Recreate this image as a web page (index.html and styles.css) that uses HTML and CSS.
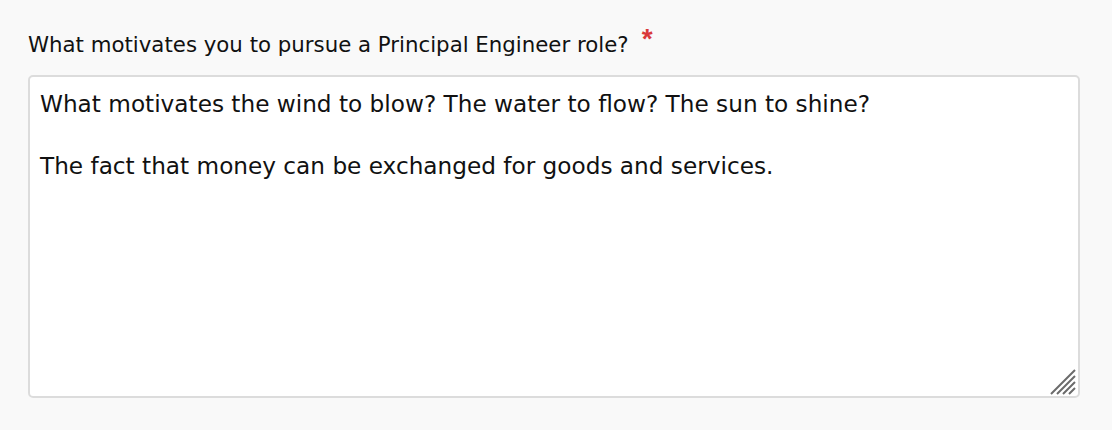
FILE: index.html
```html
<!DOCTYPE html>
<html lang="en">
<head>
    <meta charset="UTF-8">
    <title>Question</title>
    <link rel="stylesheet" href="styles.css">
</head>
<body>
    <div class="field">
        <label class="field-label" for="motivation">
            What motivates you to pursue a Principal Engineer role?
            <span class="required">*</span>
        </label>
        <div class="textarea-wrap">
            <textarea id="motivation" class="answer">What motivates the wind to blow? The water to flow? The sun to shine?

The fact that money can be exchanged for goods and services.</textarea>
            <svg class="resize-grip" width="26" height="26" viewBox="0 0 26 26">
                <path d="M1 25 L25 1 M7 25 L25 7 M13 25 L25 13 M19 25 L25 19" stroke="#6b6b6b" stroke-width="2" />
            </svg>
        </div>
    </div>
</body>
</html>
```

FILE: styles.css
```css
* {
    margin: 0;
    padding: 0;
    box-sizing: border-box;
}

body {
    background-color: #f9f9f9;
    font-family: 'DejaVu Sans', 'Liberation Sans', sans-serif;
    color: #111;
}

.field {
    padding: 32px 32px 0 28px;
}

.field-label {
    display: flex;
    align-items: flex-start;
    gap: 13px;
    font-size: 21.3px;
    line-height: 25px;
    margin-bottom: 18px;
}

.required {
    color: #d93a3a;
    font-family: 'Liberation Sans', sans-serif;
    font-weight: bold;
    font-size: 28px;
    line-height: 18px;
    margin-top: -2px;
}

.textarea-wrap {
    position: relative;
}

.answer {
    display: block;
    width: 1052px;
    height: 323px;
    padding: 11px 10px;
    border: 2px solid #dcdcdc;
    border-radius: 5px;
    background: #fff;
    font-family: 'DejaVu Sans', 'Liberation Sans', sans-serif;
    font-size: 23.2px;
    line-height: 31px;
    color: #111;
    resize: none;
    outline: none;
}

.resize-grip {
    position: absolute;
    right: 4px;
    bottom: 3px;
}
```
